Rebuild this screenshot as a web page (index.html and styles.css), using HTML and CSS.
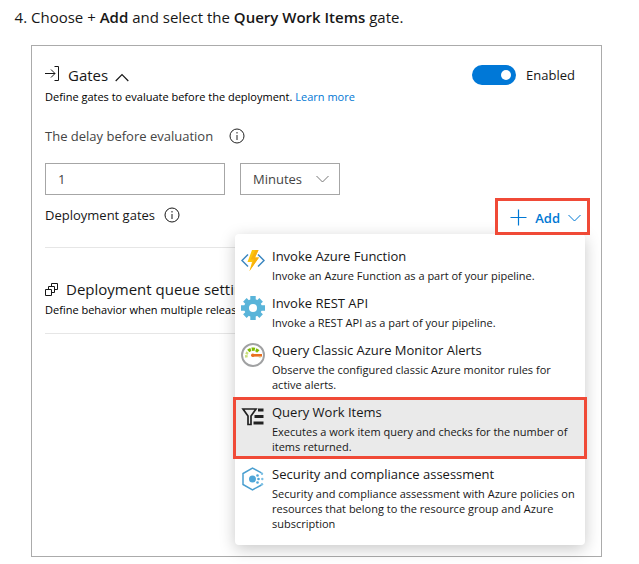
FILE: index.html
```html
<!DOCTYPE html>
<html lang="en">
<head>
<meta charset="utf-8">
<meta name="viewport" content="width=device-width, initial-scale=1">
<title>Query Work Items gate</title>
<link rel="stylesheet" href="styles.css">
</head>
<body>
<ol class="steps" start="4">
  <li>
    <p class="step-text">Choose + <strong>Add</strong> and select the <strong>Query Work Items</strong> gate.</p>
    <section class="panel">
      <header class="gates-head">
        <h2 class="title">
          <svg class="icon-enter" width="16" height="16" viewBox="0 0 16 16" fill="none" stroke="currentColor"><path d="M0 7.500h10M6 3.500l4 4-4 4M9.500.5h4v14h-4"/></svg>
          <span>Gates</span>
          <svg class="icon-collapse" width="14" height="9" viewBox="0 0 14 9" fill="none" stroke="currentColor" stroke-width="1.200"><path d="M.7 8 7 1.500 13.300 8"/></svg>
        </h2>
        <label class="toggle"><input type="checkbox" role="switch" checked><span>Enabled</span></label>
      </header>
      <p class="note">Define gates to evaluate before the deployment. <a href="#learn">Learn more</a></p>

      <div class="delay-label">
        <label for="delay">The delay before evaluation</label>
        <svg width="16" height="16" viewBox="0 0 16 16" fill="none" stroke="currentColor"><circle cx="8" cy="8" r="7"/><path d="M8 7v5M8 4v1.500"/></svg>
      </div>
      <div class="delay-fields">
        <input class="field" id="delay" type="text" value="1">
        <div class="unit">
          <select class="field" aria-label="Delay unit"><option>Minutes</option></select>
          <svg width="13" height="8" viewBox="0 0 13 8" fill="none" stroke="currentColor"><path d="M.5 1 6.500 7l6-6"/></svg>
        </div>
      </div>

      <div class="gates-row">
        <div class="gates-label">
          <span>Deployment gates</span>
          <svg width="16" height="16" viewBox="0 0 16 16" fill="none" stroke="currentColor"><circle cx="8" cy="8" r="7"/><path d="M8 7v5M8 4v1.500"/></svg>
        </div>
        <div class="add">
          <button class="add-button" type="button" aria-haspopup="menu" aria-expanded="true">
            <svg width="17" height="17" viewBox="0 0 17 17" fill="none" stroke="currentColor" stroke-width="1.200"><path d="M8.500.5v16M.5 8.500h16"/></svg>
            <span>Add</span>
            <svg width="13" height="8" viewBox="0 0 13 8" fill="none" stroke="currentColor"><path d="M.5 1 6.500 7l6-6"/></svg>
          </button>
          <div class="menu" role="menu">
            <button class="item" type="button" role="menuitem">
              <svg viewBox="0 0 24 24" width="24" height="24"><path d="M7 5.500 1 11.500l6 6M17 5.500l6 6-6 6" fill="none" stroke="#3c87c0" stroke-width="1.500"/><path d="M11 1h6.500L14 8.500h4L8.500 22 11 13H6.500z" fill="#fcc60d"/><path d="M17.500 1 14 8.500h4L8.500 22l4.500-11.500H9.500L14.500 1z" fill="#f9b10c"/></svg>
              <span class="item-text"><span class="item-title">Invoke Azure Function</span><span class="item-desc">Invoke an Azure Function as a part of your pipeline.</span></span>
            </button>
            <button class="item" type="button" role="menuitem">
              <svg viewBox="0 0 24 24" width="24" height="24" fill="#59b4d9"><circle cx="12" cy="12" r="6.500" fill="none" stroke="#59b4d9" stroke-width="5"/><path d="M9.300 5V0h5.400v5zM9.300 19v5h5.400v-5zM5 9.300H0v5.400h5zM19 9.300h5v5.400h-5z"/><path transform="rotate(45 12 12)" d="M9.500 5V.5h5V5zM9.500 19v4.500h5V19zM5 9.500H.5v5H5zM19 9.500h4.500v5H19z"/></svg>
              <span class="item-text"><span class="item-title">Invoke REST API</span><span class="item-desc">Invoke a REST API as a part of your pipeline.</span></span>
            </button>
            <button class="item" type="button" role="menuitem">
              <svg viewBox="0 0 24 24" width="24" height="24" fill="none"><circle cx="12" cy="12" r="11" fill="#fff" stroke="#a0a1a2" stroke-width="1.900"/><path d="M5.500 14.500a6.600 6.600 0 0 1 1.200-5.500" stroke="#c9de7a" stroke-width="2.600" stroke-dasharray="2.400 .8"/><path d="M7.300 8a7 7 0 0 1 10.500 1.200" stroke="#7fba00" stroke-width="3.400" stroke-dasharray="3 .9"/><path d="M18.800 15a7 7 0 0 0 .2-1" stroke="#dce8b8" stroke-width="2.400"/><path d="M11 11h10v2.600H11z" fill="#e8701f"/><circle cx="11.800" cy="12.300" r="1.800" fill="#e8701f"/></svg>
              <span class="item-text"><span class="item-title">Query Classic Azure Monitor Alerts</span><span class="item-desc">Observe the configured classic Azure monitor rules for active alerts.</span></span>
            </button>
            <button class="item item-current" type="button" role="menuitem">
              <svg viewBox="0 0 24 24" width="24" height="24"><path d="M2 4h13l-5 7v8.500H7V11z" fill="none" stroke="#222" stroke-width="1.700"/><path d="M17 3.500h5.500v3H17zM13.500 10h9v3h-9zM12.500 16.500h10v3h-10z" fill="#222"/></svg>
              <span class="item-text"><span class="item-title">Query Work Items</span><span class="item-desc">Executes a work item query and checks for the number of items returned.</span></span>
            </button>
            <button class="item" type="button" role="menuitem">
              <svg viewBox="0 0 24 24" width="24" height="24" fill="#4ea6d8"><path d="M20.500 5.800 11.500 1 2 6.500v11l9.500 5.300 9-4.800" fill="none" stroke="#4a9fd0" stroke-width="1.500"/><circle cx="11.500" cy="12" r="3.500"/><circle cx="16.500" cy="8.500" r="1.300"/><circle cx="16.500" cy="15.500" r="1.300"/><circle cx="17.500" cy="12" r="1.300"/><g fill="#7cc0e4"><circle cx="21" cy="6.800" r="1.200"/><circle cx="21.300" cy="12" r="1.200"/><circle cx="21" cy="17.200" r="1.200"/></g></svg>
              <span class="item-text"><span class="item-title">Security and compliance assessment</span><span class="item-desc">Security and compliance assessment with Azure policies on resources that belong to the resource group and Azure subscription</span></span>
            </button>
          </div>
        </div>
      </div>

      <div class="queue">
        <h2 class="title queue-title">
          <svg width="13" height="13" viewBox="0 0 13 13" fill="none" stroke="currentColor"><path d="M6.500 3.500v-3h6v6h-3M3.500 6.500v-3h6v6h-3M.5 6.500h6v6h-6z"/></svg>
          <span>Deployment queue settings</span>
        </h2>
        <p class="note">Define behavior when multiple releases</p>
      </div>
    </section>
  </li>
</ol>
</body>
</html>
```
FILE: styles.css
```css
* { box-sizing: border-box; }

body {
  margin: 0;
  background: #fff;
  color: #171717;
  font-family: "Segoe UI", "Open Sans", "Noto Sans", sans-serif;
  font-size: 13px;
  line-height: 20px;
}

svg { display: block; flex: none; }
p, h2 { margin: 0; }
button, input, select { font: inherit; color: inherit; }

.steps {
  margin: 0;
  padding: 5px 37px 7px 31px;
  font-size: 15px;
  line-height: 24px;
}
.step-text { margin-bottom: 16px; }
.step-text strong { font-weight: 600; }

.panel {
  border: 1px solid #ababab;
  min-height: 512px;
  padding: 17px 16px 0 13px;
  font-size: 13px;
  line-height: 20px;
}

.title {
  display: flex;
  align-items: center;
  font-size: 15px;
  font-weight: 400;
  line-height: 24px;
}
.gates-head {
  display: flex;
  align-items: center;
  justify-content: space-between;
  padding-right: 10px;
}
.gates-head .title { gap: 7px; }
.icon-enter { align-self: flex-start; margin-top: 3px; }
.icon-collapse { align-self: flex-end; margin-bottom: 5px; }

.toggle {
  display: flex;
  align-items: center;
  gap: 10px;
  line-height: 20px;
}
.toggle input {
  appearance: none;
  width: 44px;
  height: 20px;
  margin: 0;
  padding: 5px;
  border-radius: 10px;
  background: #0078d7;
  display: flex;
  justify-content: flex-end;
}
.toggle input::before {
  content: "";
  width: 10px;
  height: 10px;
  border-radius: 50%;
  background: #fff;
}

.note { font-size: 11px; line-height: 20px; color: #000; }
a { color: #0078d4; text-decoration: none; }

.delay-label,
.gates-label { display: flex; align-items: center; }
.delay-label { gap: 16px; margin-top: 19px; color: #444; }
.delay-label svg { color: #222; }
.gates-label { gap: 9px; margin-top: 7px; }

.delay-fields { display: flex; gap: 15px; margin-top: 17px; }
.field {
  width: 180px;
  height: 32px;
  padding: 0 12px;
  border: 1px solid #a6a6a6;
  border-radius: 0;
  background: #fff;
  color: #444;
}
.unit { display: grid; align-items: center; }
.unit > * { grid-area: 1 / 1; }
.unit select { appearance: none; width: 100px; }
.unit svg { justify-self: end; margin-right: 11px; color: #777; pointer-events: none; }

.gates-row {
  display: flex;
  justify-content: space-between;
  align-items: flex-start;
  margin-top: 3px;
  padding-bottom: 12px;
  border-bottom: 1px solid #e6e6e6;
}
.add { position: relative; margin-right: -5px; }
.add-button {
  position: relative;
  z-index: 1;
  display: flex;
  align-items: center;
  gap: 8px;
  height: 37px;
  padding: 2px 6px 0 12px;
  border: 3px solid #f04a37;
  background: #fff;
  color: #0078d4;
  font-weight: 600;
}

.menu {
  position: absolute;
  top: 36px;
  right: 5px;
  width: 350px;
  padding: 8px 0;
  border-radius: 4px;
  background: #fff;
  box-shadow: 0 4px 16px rgb(0 0 0 / 22%);
}
.item {
  display: flex;
  gap: 7px;
  width: 100%;
  padding: 4px 8px 6px 6px;
  border: 0;
  background: none;
  text-align: left;
}
.item svg { margin-top: 3px; }
.item-current {
  width: calc(100% + 4px);
  margin: -1px -2px 1px;
  padding: 5px 10px 5px 8px;
  background: #eaeaea;
  outline: 3px solid #f04a37;
  outline-offset: -3px;
}
.item-title { display: block; margin-bottom: 2px; line-height: 20px; }
.item-desc { display: block; font-size: 11px; line-height: 15px; }

.queue { padding: 29px 0 14px; border-bottom: 1px solid #e6e6e6; }
.queue-title { gap: 8px; }
.queue .note { line-height: 18px; }
```
